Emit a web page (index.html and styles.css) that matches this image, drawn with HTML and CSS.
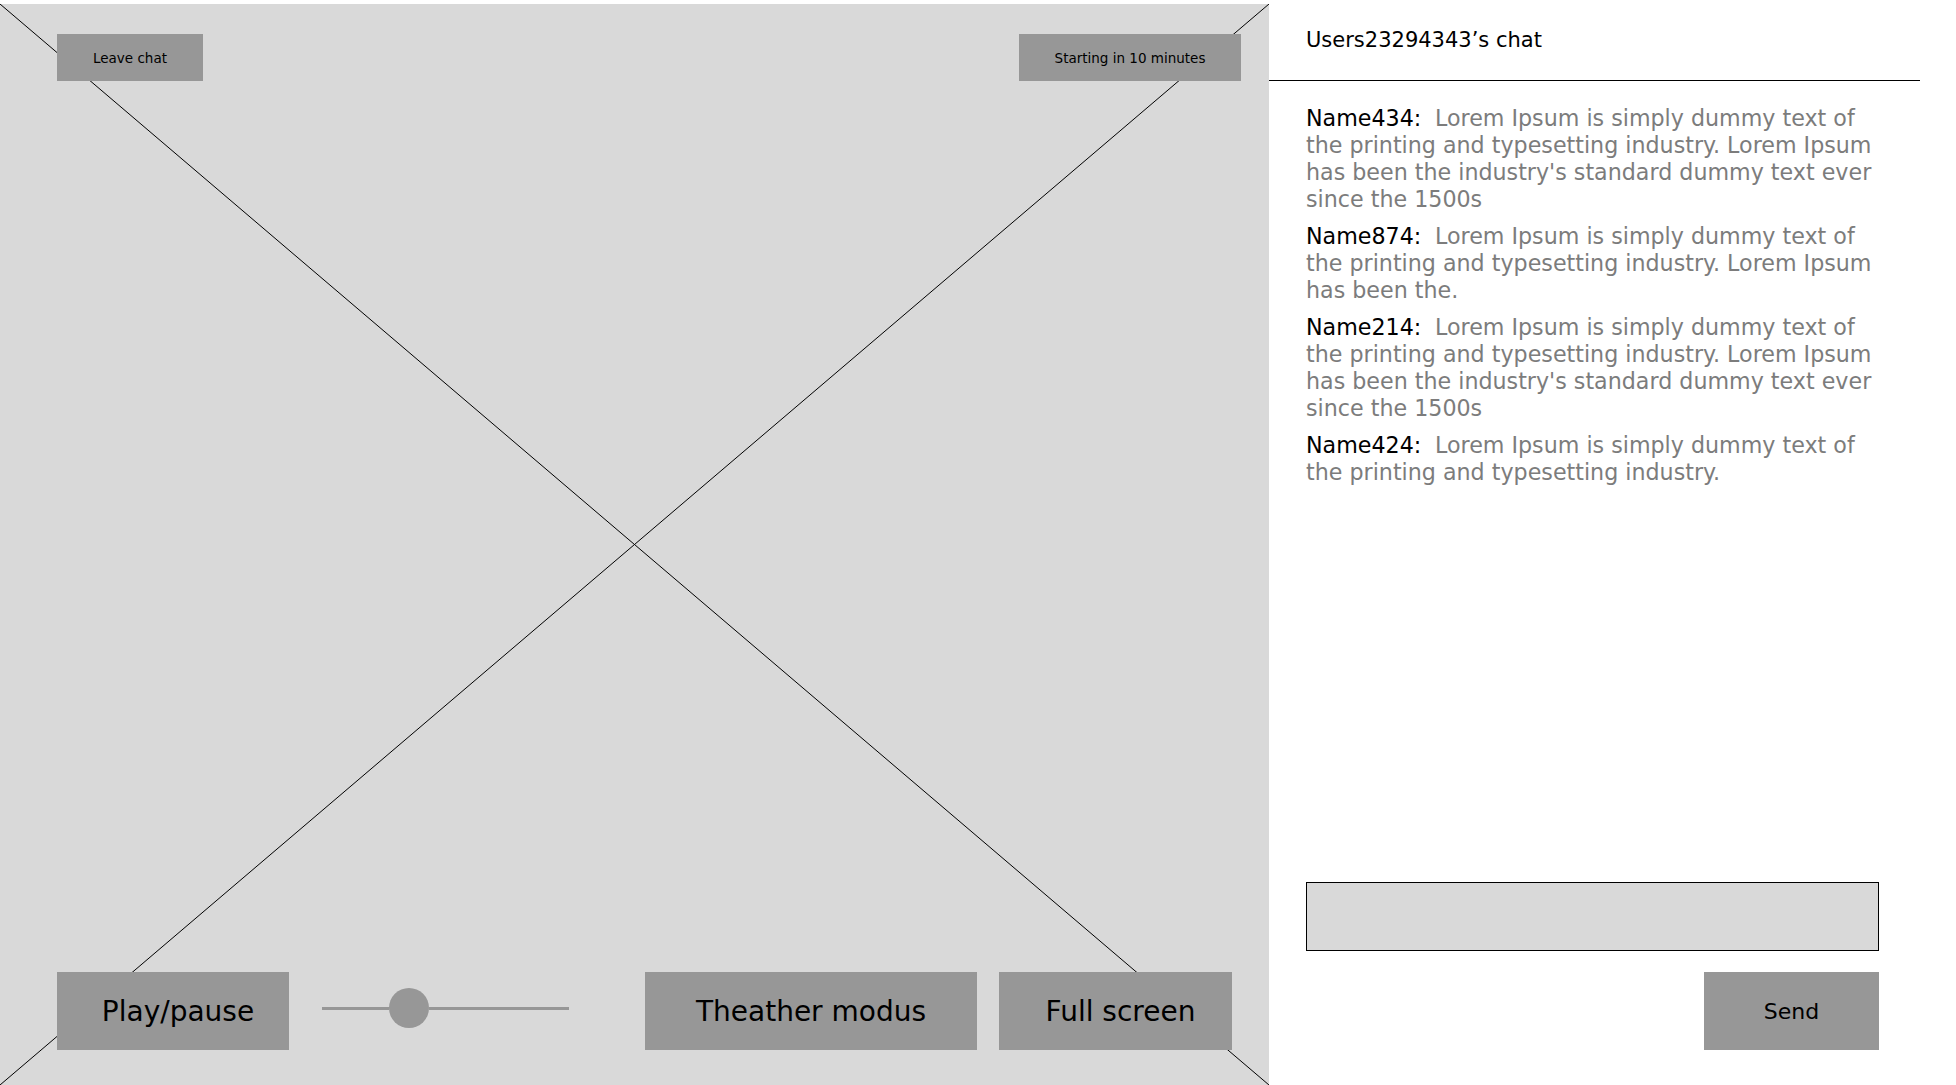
FILE: index.html
```html
<!DOCTYPE html>
<html lang="en">
<head>
<meta charset="utf-8">
<title>Stream chat</title>
<link rel="stylesheet" href="styles.css">
</head>
<body>
<div class="page">
  <section class="video">
    <svg class="video-x" viewBox="0 0 100 100" preserveAspectRatio="none" aria-hidden="true">
      <line x1="0" y1="0" x2="100" y2="100" vector-effect="non-scaling-stroke"/>
      <line x1="100" y1="0" x2="0" y2="100" vector-effect="non-scaling-stroke"/>
    </svg>
    <div class="video-top">
      <button class="btn btn-small btn-leave">Leave chat</button>
      <button class="btn btn-small btn-start">Starting in 10 minutes</button>
    </div>
    <div class="video-bottom">
      <button class="btn btn-large btn-play">Play/pause</button>
      <div class="slider">
        <span class="track track-left"></span>
        <span class="thumb"></span>
        <span class="track track-right"></span>
      </div>
      <button class="btn btn-large btn-theater">Theather modus</button>
      <button class="btn btn-large btn-full">Full screen</button>
    </div>
  </section>
  <aside class="chat">
    <header class="chat-header">Users23294343’s chat</header>
    <div class="messages">
      <p class="msg"><span class="name">Name434:</span><span class="body">Lorem Ipsum is simply dummy text of the printing and typesetting industry. Lorem Ipsum has been the industry's standard dummy text ever since the 1500s</span></p>
      <p class="msg"><span class="name">Name874:</span><span class="body">Lorem Ipsum is simply dummy text of the printing and typesetting industry. Lorem Ipsum has been the.</span></p>
      <p class="msg"><span class="name">Name214:</span><span class="body">Lorem Ipsum is simply dummy text of the printing and typesetting industry. Lorem Ipsum has been the industry's standard dummy text ever since the 1500s</span></p>
      <p class="msg"><span class="name">Name424:</span><span class="body">Lorem Ipsum is simply dummy text of the printing and typesetting industry.</span></p>
    </div>
    <div class="composer">
      <div class="input"></div>
      <button class="btn btn-send">Send</button>
    </div>
  </aside>
</div>
</body>
</html>
```

FILE: styles.css
```css
* { box-sizing: border-box; }

html, body {
  margin: 0;
  padding: 0;
  background: #ffffff;
}

body {
  font-family: "DejaVu Sans", "Liberation Sans", sans-serif;
  color: #000;
}

.page {
  display: flex;
  width: 1956px;
  height: 1085px;
  overflow: hidden;
}

/* ---------- video ---------- */
.video {
  position: relative;
  width: 1269px;
  flex: 0 0 1269px;
  margin-top: 4px;
  height: 1081px;
  background: #d9d9d9;
  display: flex;
  flex-direction: column;
  justify-content: space-between;
}

.video-x {
  position: absolute;
  inset: 0;
  width: 100%;
  height: 100%;
}

.video-x line {
  stroke: #000;
  stroke-width: 1px;
}

.btn {
  position: relative;
  border: 0;
  margin: 0;
  padding: 0;
  background: #979797;
  color: #000;
  font-family: "DejaVu Sans", "Liberation Sans", sans-serif;
  display: flex;
  align-items: center;
  justify-content: center;
}

.video-top {
  display: flex;
  justify-content: space-between;
  padding: 30px 28px 0 57px;
}

.btn-small {
  height: 47px;
  font-size: 13.5px;
}

.btn-leave { width: 146px; }
.btn-start { width: 222px; }

.video-bottom {
  display: flex;
  align-items: center;
  padding: 0 37px 35px 57px;
}

.btn-large {
  height: 78px;
  font-size: 28px;
}

.btn-play { width: 232px; padding-left: 10px; }
.btn-theater { width: 332px; margin-left: auto; }
.btn-full { width: 233px; margin-left: 22px; padding-left: 10px; }

.slider {
  position: relative;
  display: flex;
  align-items: center;
  width: 247px;
  margin-left: 33px;
  margin-bottom: 6px;
}

.track {
  height: 3px;
  background: #979797;
}

.track-left { width: 67px; }
.track-right { flex: 1; }

.thumb {
  width: 40px;
  height: 40px;
  border-radius: 50%;
  background: #979797;
  flex: 0 0 40px;
}

/* ---------- chat ---------- */
.chat {
  flex: 1;
  display: flex;
  flex-direction: column;
  height: 1085px;
}

.chat-header {
  height: 81px;
  margin-right: 36px;
  border-bottom: 1px solid #000;
  padding-left: 37px;
  display: flex;
  align-items: center;
  font-size: 21px;
  padding-bottom: 1px;
}

.messages {
  flex: 1;
  padding: 24px 76px 0 37px;
  display: flex;
  flex-direction: column;
  gap: 10px;
}

.msg {
  margin: 0;
  font-size: 22.2px;
  line-height: 27px;
  color: #7c7c7c;
}

.name {
  display: inline-block;
  width: 129px;
  color: #000;
}

.composer {
  display: flex;
  flex-direction: column;
  align-items: flex-end;
  padding: 0 77px 35px 37px;
  gap: 21px;
}

.input {
  width: 100%;
  height: 69px;
  background: #d9d9d9;
  border: 1px solid #000;
}

.btn-send {
  width: 175px;
  height: 78px;
  font-size: 22px;
}
```
